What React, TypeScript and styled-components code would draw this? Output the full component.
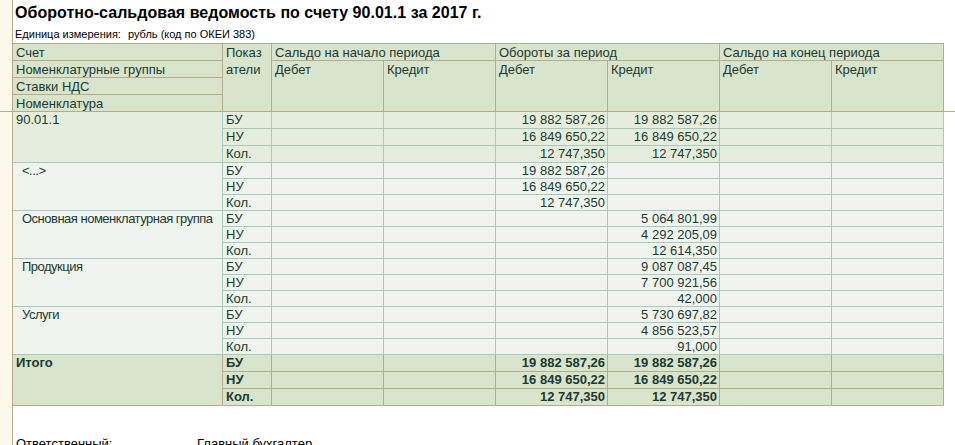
import React from 'react';
import styled, { createGlobalStyle } from 'styled-components';

type Tone = 'level1' | 'level2' | 'total';

interface Group {
  name: string;
  tone: Tone;
  // per indicator: [turnover debit, turnover credit]
  values: [string, string][];
}

const INDICATORS = ['БУ', 'НУ', 'Кол.'];

const groups: Group[] = [
  {
    name: '90.01.1',
    tone: 'level1',
    values: [
      ['19 882 587,26', '19 882 587,26'],
      ['16 849 650,22', '16 849 650,22'],
      ['12 747,350', '12 747,350'],
    ],
  },
  {
    name: '<...>',
    tone: 'level2',
    values: [
      ['19 882 587,26', ''],
      ['16 849 650,22', ''],
      ['12 747,350', ''],
    ],
  },
  {
    name: 'Основная номенклатурная группа',
    tone: 'level2',
    values: [
      ['', '5 064 801,99'],
      ['', '4 292 205,09'],
      ['', '12 614,350'],
    ],
  },
  {
    name: 'Продукция',
    tone: 'level2',
    values: [
      ['', '9 087 087,45'],
      ['', '7 700 921,56'],
      ['', '42,000'],
    ],
  },
  {
    name: 'Услуги',
    tone: 'level2',
    values: [
      ['', '5 730 697,82'],
      ['', '4 856 523,57'],
      ['', '91,000'],
    ],
  },
  {
    name: 'Итого',
    tone: 'total',
    values: [
      ['19 882 587,26', '19 882 587,26'],
      ['16 849 650,22', '16 849 650,22'],
      ['12 747,350', '12 747,350'],
    ],
  },
];

const tones: Record<Tone, { bg: string; line: string; rowH: number; indent: number; bold: boolean; tracking: number }> = {
  level1: { bg: '#e5eedc', line: '#a9c9bd', rowH: 17, indent: 3, bold: false, tracking: 0 },
  level2: { bg: '#eff5ee', line: '#a9c9bd', rowH: 16, indent: 9, bold: false, tracking: -0.5 },
  total: { bg: '#d8e4cc', line: '#b8ab8c', rowH: 17, indent: 3, bold: true, tracking: 0 },
};

const TAN = '#b8ab8c';
const COLS = '210px 49px repeat(6, 112px)';

const GlobalStyle = createGlobalStyle`
  html, body {
    margin: 0;
    padding: 0;
    background: #fff;
  }
  body {
    font-family: "Liberation Sans", Arial, sans-serif;
    color: #1c3a32;
    overflow: hidden;
  }
`;

const Page = styled.div`
  width: 955px;
  height: 445px;
  overflow: hidden;
  display: flex;
  flex-direction: column;
`;

const Band = styled.div<{ $divider?: boolean; $grow?: boolean }>`
  display: flex;
  flex: ${p => (p.$grow ? 1 : 'none')};
  border-bottom: ${p => (p.$divider ? `1px solid ${TAN}` : 'none')};
`;

const Gutter = styled.div`
  width: 12px;
  flex: none;
  background: #fdf8ec;
  border-right: 1px solid ${TAN};
`;

const Content = styled.div`
  flex: 1;
  min-width: 0;
  display: flex;
  flex-direction: column;
`;

const Title = styled.h1`
  margin: 4px 0 0 2px;
  font-size: 16px;
  line-height: 18px;
  font-weight: bold;
  letter-spacing: 0.03px;
  color: #000;
  white-space: nowrap;
`;

const UnitLine = styled.div`
  display: flex;
  margin: 6px 0 0 2px;
  font-size: 11px;
  line-height: 13px;
  color: #000;
  white-space: nowrap;
`;

const UnitLabel = styled.span`
  width: 113px;
`;

const HeaderGrid = styled.div`
  display: grid;
  grid-template-columns: ${COLS};
  grid-template-rows: 17px 17px 17px 16px;
  width: 931px;
  margin-top: 2px;
  border-top: 1px solid ${TAN};
  background: #d8e4cc;
`;

const HCell = styled.div<{ $col: string; $row: string; $bottom?: boolean }>`
  grid-column: ${p => p.$col};
  grid-row: ${p => p.$row};
  box-sizing: border-box;
  border-right: 1px solid ${TAN};
  border-bottom: ${p => (p.$bottom ? `1px solid ${TAN}` : 'none')};
  padding: 0 3px;
  font-size: 13px;
  line-height: 17px;
  white-space: nowrap;
  overflow: hidden;
`;

const Body = styled.div`
  width: 931px;
  display: flex;
  flex-direction: column;
`;

const GroupGrid = styled.div<{ $tone: Tone }>`
  display: grid;
  grid-template-columns: ${COLS};
  grid-template-rows: repeat(3, ${p => tones[p.$tone].rowH}px);
  background: ${p => tones[p.$tone].bg};
  font-weight: ${p => (tones[p.$tone].bold ? 'bold' : 'normal')};
`;

const Cell = styled.div<{ $tone: Tone; $align?: 'left' | 'right'; $span?: number; $indent?: number; $tracking?: number }>`
  grid-row: ${p => (p.$span ? `span ${p.$span}` : 'auto')};
  box-sizing: border-box;
  border-right: 1px solid ${p => tones[p.$tone].line};
  border-bottom: 1px solid ${p => tones[p.$tone].line};
  padding: 0 2px 0 ${p => p.$indent ?? 3}px;
  text-align: ${p => p.$align ?? 'left'};
  font-size: 13px;
  letter-spacing: ${p => p.$tracking ?? 0}px;
  line-height: ${p => tones[p.$tone].rowH - 1}px;
  white-space: nowrap;
  overflow: hidden;
`;

const Footer = styled.div`
  display: grid;
  grid-template-columns: 181px auto;
  margin-top: 30px;
  padding-left: 3px;
  font-size: 13px;
  line-height: 16px;
  color: #000;
  white-space: nowrap;
`;

const ReportGroup: React.FC<{ group: Group }> = ({ group }) => {
  const t = group.tone;
  return (
    <GroupGrid $tone={t}>
      <Cell $tone={t} $span={3} $indent={tones[t].indent} $tracking={tones[t].tracking}>
        {group.name}
      </Cell>
      {INDICATORS.map((ind, i) => (
        <React.Fragment key={ind}>
          <Cell $tone={t}>{ind}</Cell>
          <Cell $tone={t} $align="right" />
          <Cell $tone={t} $align="right" />
          <Cell $tone={t} $align="right">{group.values[i][0]}</Cell>
          <Cell $tone={t} $align="right">{group.values[i][1]}</Cell>
          <Cell $tone={t} $align="right" />
          <Cell $tone={t} $align="right" />
        </React.Fragment>
      ))}
    </GroupGrid>
  );
};

const App: React.FC = () => (
  <>
    <GlobalStyle />
    <Page>
      <Band $divider>
        <Gutter />
        <Content>
          <Title>Оборотно-сальдовая ведомость по счету 90.01.1 за 2017 г.</Title>
          <UnitLine>
            <UnitLabel>Единица измерения:</UnitLabel>
            <span>рубль (код по ОКЕИ 383)</span>
          </UnitLine>
          <HeaderGrid>
            <HCell $col="1" $row="1" $bottom>Счет</HCell>
            <HCell $col="1" $row="2" $bottom>Номенклатурные группы</HCell>
            <HCell $col="1" $row="3" $bottom>Ставки НДС</HCell>
            <HCell $col="1" $row="4">Номенклатура</HCell>
            <HCell $col="2" $row="1 / span 4">
              Показ
              <br />
              атели
            </HCell>
            <HCell $col="3 / span 2" $row="1" $bottom>Сальдо на начало периода</HCell>
            <HCell $col="5 / span 2" $row="1" $bottom>Обороты за период</HCell>
            <HCell $col="7 / span 2" $row="1" $bottom>Сальдо на конец периода</HCell>
            <HCell $col="3" $row="2 / span 3">Дебет</HCell>
            <HCell $col="4" $row="2 / span 3">Кредит</HCell>
            <HCell $col="5" $row="2 / span 3">Дебет</HCell>
            <HCell $col="6" $row="2 / span 3">Кредит</HCell>
            <HCell $col="7" $row="2 / span 3">Дебет</HCell>
            <HCell $col="8" $row="2 / span 3">Кредит</HCell>
          </HeaderGrid>
        </Content>
      </Band>
      <Band $grow>
        <Gutter />
        <Content>
          <Body>
            {groups.map(g => (
              <ReportGroup key={g.name} group={g} />
            ))}
          </Body>
          <Footer>
            <span>Ответственный:</span>
            <span>Главный бухгалтер</span>
          </Footer>
        </Content>
      </Band>
    </Page>
  </>
);

export default App;
